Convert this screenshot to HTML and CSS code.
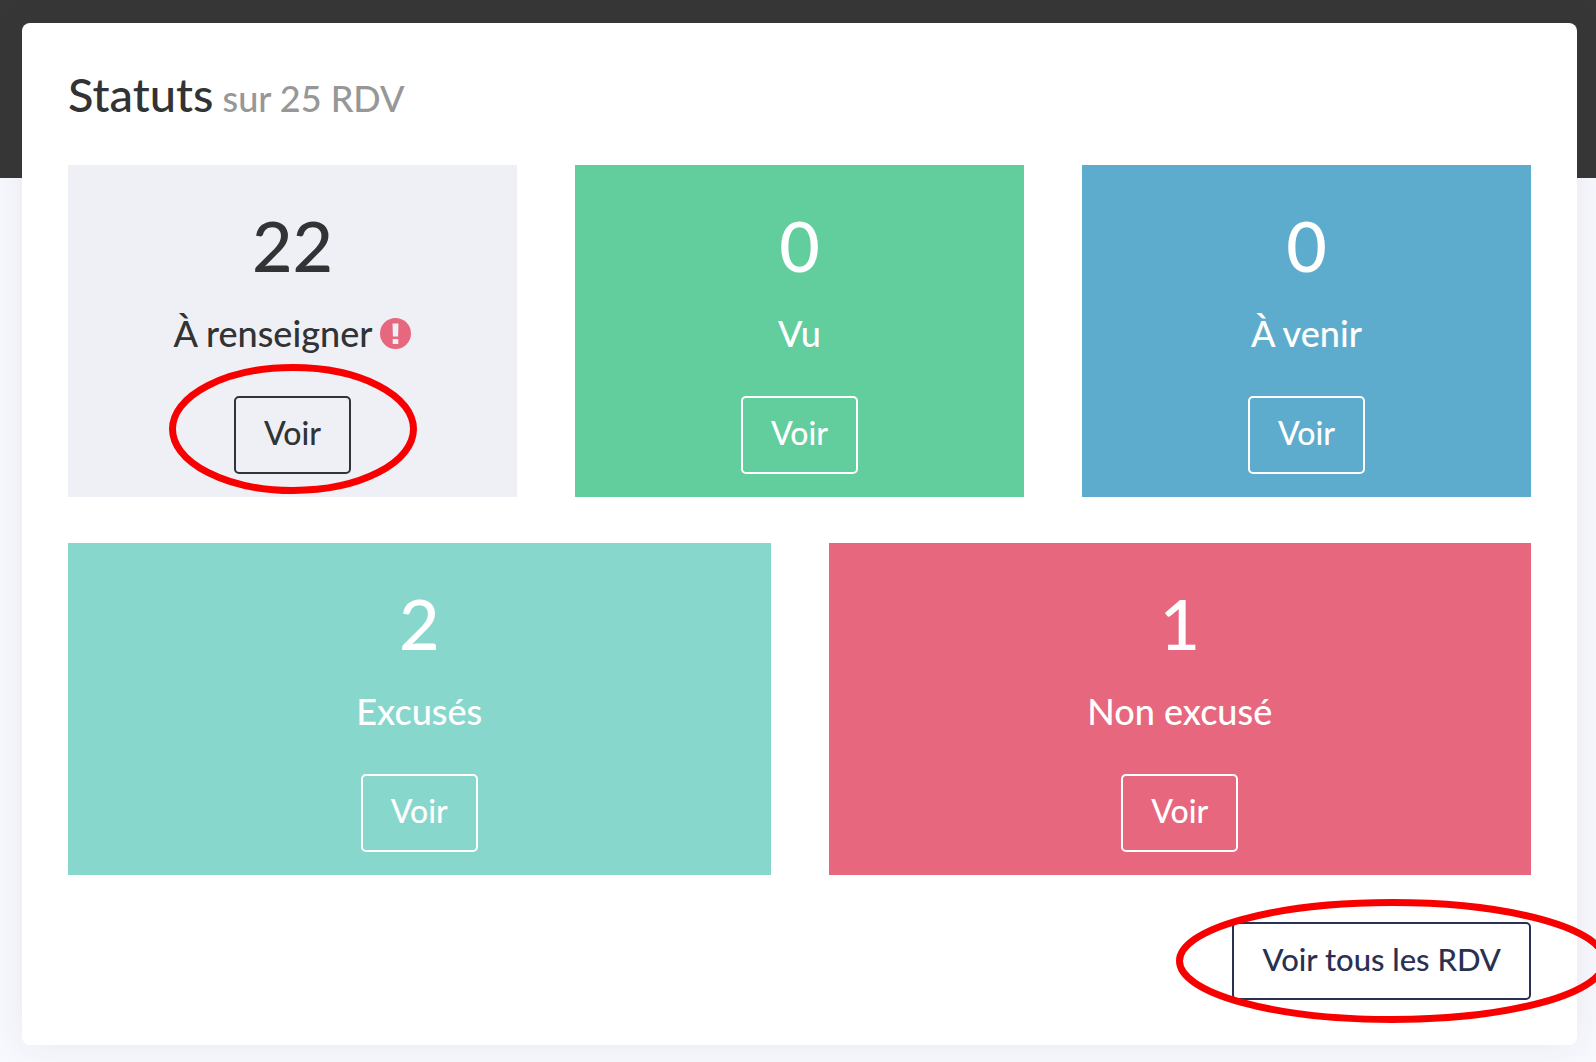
FILE: index.html
```html
<!DOCTYPE html>
<html lang="fr">
<head>
<meta charset="utf-8">
<meta name="viewport" content="width=device-width, initial-scale=1">
<title>Statuts des RDV</title>
<link rel="stylesheet" href="styles.css">
</head>
<body>
<main class="page">
  <section class="card">
    <h2 class="card-title">Statuts<small> sur 25 RDV</small></h2>
    <div class="stats">
      <article class="stat stat-pending">
        <p class="stat-value">22</p>
        <p class="stat-label">À renseigner
          <svg class="alert" viewBox="0 0 31 31" aria-hidden="true"><circle cx="15.500" cy="15.500" r="15.500" fill="#e7677e"/><path d="M12.500 5.500h6l-.4 13h-5.200zM12.700 21h5.600v5h-5.600z" fill="#eff0f6"/></svg>
        </p>
        <span class="highlight">
          <a class="btn" href="#renseigner">Voir</a>
          <svg class="ring" viewBox="0 0 248 130" aria-hidden="true"><ellipse cx="124" cy="65" rx="120.500" ry="61.500"/></svg>
        </span>
      </article>
      <article class="stat stat-seen">
        <p class="stat-value">0</p>
        <p class="stat-label">Vu</p>
        <a class="btn" href="#vu">Voir</a>
      </article>
      <article class="stat stat-upcoming">
        <p class="stat-value">0</p>
        <p class="stat-label">À venir</p>
        <a class="btn" href="#venir">Voir</a>
      </article>
      <article class="stat stat-excused">
        <p class="stat-value">2</p>
        <p class="stat-label">Excusés</p>
        <a class="btn" href="#excuses">Voir</a>
      </article>
      <article class="stat stat-absent">
        <p class="stat-value">1</p>
        <p class="stat-label">Non excusé</p>
        <a class="btn" href="#non-excuse">Voir</a>
      </article>
    </div>
    <div class="card-footer">
      <span class="highlight">
        <a class="btn btn-primary" href="#tous">Voir tous les RDV</a>
        <svg class="ring ring-wide" viewBox="0 0 432 124" aria-hidden="true"><ellipse cx="216" cy="62" rx="212.500" ry="58.500"/></svg>
      </span>
    </div>
  </section>
</main>
</body>
</html>
```
FILE: styles.css
```css
* {
  box-sizing: border-box;
}

body {
  margin: 0;
  background: #f8f9fe;
  color: #313334;
  font-family: Lato, "Liberation Sans", sans-serif;
  font-weight: 500;
}

.page {
  min-height: 100vh;
  overflow: hidden;
  padding: 23px 19px 17px 22px;
  background: linear-gradient(#373737 178px, transparent 178px);
}

.card {
  padding: 43px 46px 45px;
  border-radius: 8px;
  background: #fff;
  box-shadow: 0 0 40px rgba(50, 50, 50, 0.08);
}

.card-title {
  margin: 0 0 43px;
  font-size: 47px;
  font-weight: 500;
  line-height: 56px;
}

.card-title small {
  color: #979797;
  font-size: 36px;
  line-height: 36px;
}

.stats {
  display: grid;
  grid-template-columns: repeat(6, 1fr);
  gap: 46px 58px;
}

.stat {
  grid-column: span 2;
  display: flex;
  flex-direction: column;
  align-items: center;
  padding: 42px 16px 23px;
  color: #fff;
}

.stat-pending {
  background: #eff0f6;
  color: #313334;
}

.stat-seen {
  background: #62cd9d;
}

.stat-upcoming {
  background: #5eaccd;
}

.stat-excused {
  grid-column: span 3;
  background: #88d7cd;
}

.stat-absent {
  grid-column: span 3;
  background: #e7677e;
}

.stat-value {
  margin: 0 0 23px;
  font-size: 70px;
  line-height: 76px;
}

.stat-label {
  display: flex;
  align-items: center;
  gap: 8px;
  margin: 0 0 36px;
  font-size: 36px;
  line-height: 54px;
}

.alert {
  width: 31px;
  height: 31px;
}

.btn {
  display: block;
  padding: 11px 28px 15px;
  border: 2px solid currentColor;
  border-radius: 5px;
  color: inherit;
  font-size: 32px;
  line-height: 48px;
  text-decoration: none;
  white-space: nowrap;
}

.btn-primary {
  color: #2a3052;
  font-size: 31px;
}

.highlight {
  position: relative;
}

/* Hand-drawn style rings laid over the links they point out */
.ring {
  position: absolute;
  top: 50%;
  left: 50%;
  width: 248px;
  height: 130px;
  margin: -71px 0 0 -123px;
  overflow: visible;
  fill: none;
  stroke: #f90000;
  stroke-width: 7px;
  pointer-events: none;
}

.ring-wide {
  width: 432px;
  height: 124px;
  margin: -62px 0 0 -206px;
}

.card-footer {
  display: flex;
  justify-content: flex-end;
  margin-top: 47px;
}
```
